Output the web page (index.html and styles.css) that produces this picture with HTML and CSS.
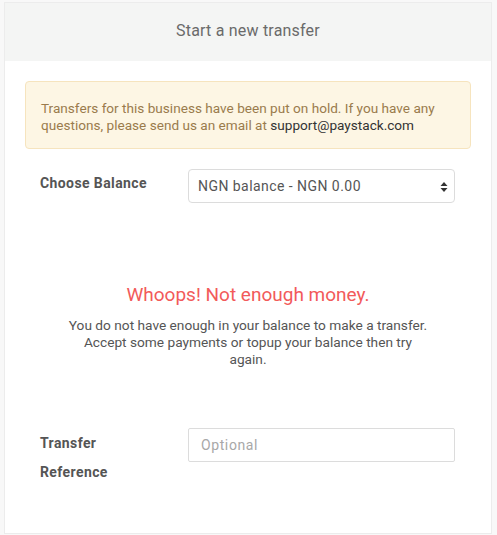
FILE: index.html
```html
<!DOCTYPE html>
<html>
<head>
<meta charset="utf-8">
<link rel="stylesheet" href="styles.css">
</head>
<body>
<div class="panel">
  <div class="panel-header">Start a new transfer</div>
  <div class="panel-body">
    <div class="alert">Transfers for this business have been put on hold. If you have any questions, please send us an email at <span class="email">support@paystack.com</span></div>
    <div class="form-row balance-row">
      <label class="label">Choose Balance</label>
      <div class="select">
        <span>NGN balance - NGN 0.00</span>
        <svg class="arrows" width="8" height="12" viewBox="0 0 8 12"><path d="M4 1 L7.5 5 H0.5 Z M4 11 L7.5 7 H0.5 Z" fill="#333"/></svg>
      </div>
    </div>
    <div class="empty">
      <h3 class="empty-title">Whoops! Not enough money.</h3>
      <p class="empty-text">You do not have enough in your balance to make a transfer. Accept some payments or topup your balance then try again.</p>
    </div>
    <div class="form-row ref-row">
      <label class="label ref-label">Transfer Reference</label>
      <div class="input"><span class="placeholder">Optional</span></div>
    </div>
  </div>
</div>
</body>
</html>
```
FILE: styles.css
```css
* { box-sizing: border-box; }
html, body { margin: 0; padding: 0; }
body {
  background: #f8f8f8;
  font-family: "Roboto", "Liberation Sans", sans-serif;
  font-size: 14px;
  color: #555;
  width: 497px;
  height: 535px;
  overflow: hidden;
}
.panel {
  margin: 2px 5px 0 4px;
  background: #fff;
  border: 1px solid #ececec;
  height: 532px;
}
.panel-header {
  background: #f4f5f4;
  height: 58px;
  display: flex;
  align-items: center;
  justify-content: center;
  padding-bottom: 4px;
  font-size: 16px;
  color: #6a6a6a;
  letter-spacing: 0.2px;
}
.panel-body {
  padding: 20px 20px 0 20px;
}
.alert {
  background: #fdf6e4;
  border: 1px solid #f6e4be;
  border-radius: 4px;
  padding: 18px 15px 15px 15px;
  color: #9a7b4c;
  font-size: 13.6px;
  line-height: 17px;
  height: 68px;
}
.email { color: #333; }
.form-row {
  display: grid;
  grid-template-columns: 148px 1fr;
  padding: 0 16px 0 15px;
}
.balance-row { margin-top: 20px; }
.label {
  font-weight: bold;
  color: #555;
  line-height: 20px;
  padding-top: 4px;
  padding-right: 28px;
  letter-spacing: 0.4px;
}
.select {
  height: 34px;
  border: 1px solid #dcdcdc;
  border-radius: 4px;
  display: flex;
  align-items: center;
  justify-content: space-between;
  padding: 0 6px 0 9px;
  color: #555;
  font-size: 14px;
  letter-spacing: 0.45px;
}
.arrows { margin-top: 1px; }
.empty {
  text-align: center;
  padding-top: 80px;
}
.empty-title {
  margin: 0;
  font-weight: normal;
  font-size: 19px;
  color: #f25a5a;
  line-height: 24px;
}
.empty-text {
  margin: 10px auto 0;
  max-width: 362px;
  font-size: 13.7px;
  line-height: 17px;
  color: #555;
}
.ref-row { margin-top: 61px; }
.ref-label {
  line-height: 29px;
  padding-top: 0;
}
.input {
  height: 34px;
  margin-top: -1px;
  border: 1px solid #dcdcdc;
  border-radius: 2px;
  display: flex;
  align-items: center;
  padding: 0 12px;
}
.placeholder { color: #a8a8a8; letter-spacing: 0.6px; }
```
